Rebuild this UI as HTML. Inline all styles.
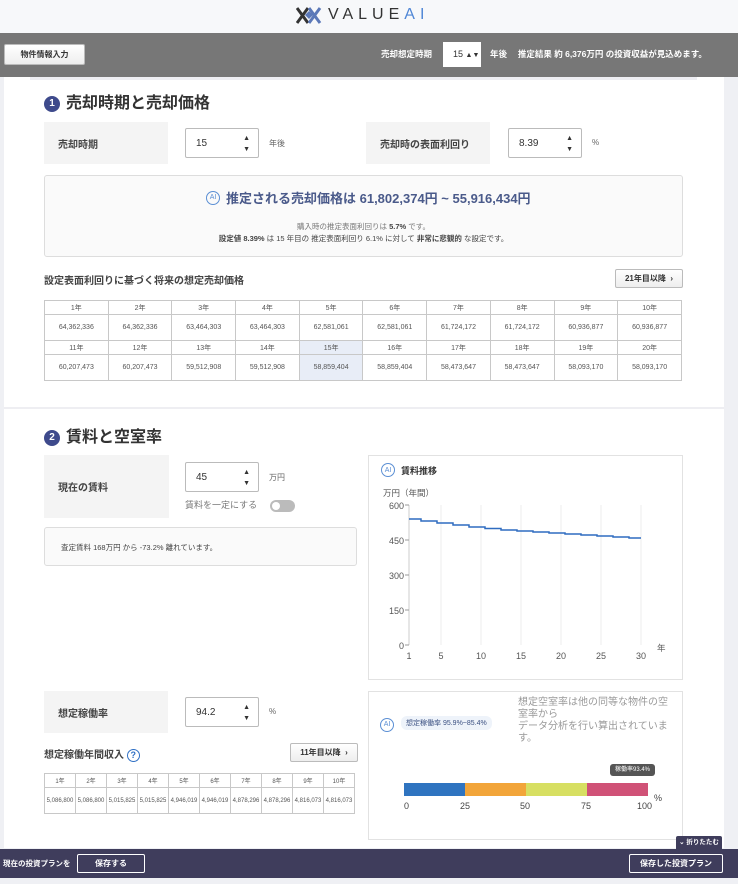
<!DOCTYPE html>
<html><head><meta charset="utf-8">
<style>
*{box-sizing:border-box;margin:0;padding:0}
body{width:738px;height:884px;overflow:hidden;background:#eff0f4;font-family:"Liberation Sans","Noto Sans CJK JP",sans-serif;color:#333;position:relative}
.a{position:absolute}
.lbl{background:#f4f4f4;font-size:10px;font-weight:bold;color:#444;display:flex;align-items:center;padding-left:14px}
.inp{background:#fff;border:1px solid #bbb;border-radius:2px;font-size:10px;display:flex;align-items:center;padding-left:10px}
.inp .sp{position:absolute;right:8px;top:4px;font-size:7px;line-height:11px;color:#333}
table{border-collapse:collapse;position:absolute;font-size:7px;color:#555;table-layout:fixed}
td{border:1px solid #c8c8c8;text-align:center}
.btn{background:linear-gradient(#fff,#eee);border:1px solid #bbb;border-radius:2px;font-size:8px;font-weight:bold;display:flex;align-items:center;justify-content:center;color:#333}
.num{display:inline-flex;width:16px;height:16px;border-radius:50%;background:#3e4a8c;color:#fff;font-size:10px;font-weight:bold;align-items:center;justify-content:center;margin-right:6px;vertical-align:2px}
.h2{font-size:16px;color:#333;font-weight:bold}
.ai{display:inline-flex;width:14px;height:14px;border-radius:50%;border:1px solid #5b8fd4;color:#5b8fd4;font-size:7px;align-items:center;justify-content:center}
</style></head><body>
<div class="a" style="left:0;top:0;width:738px;height:33px;background:#f7f8fa"></div>
<svg class="a" style="left:296px;top:7px" width="28" height="17" viewBox="0 0 28 17"><path d="M1 1L12 16M12 1L1 16" stroke="#333" stroke-width="3"/><path d="M13 1L24 16M24 1L13 16" stroke="#5b78b8" stroke-width="3"/><path d="M9 8L13 4L17 8L13 12Z" fill="#5b78b8"/></svg>
<div class="a" style="left:328px;top:6px;font-size:16px;letter-spacing:5px;color:#333">VALUE<span style="color:#4f86d6">AI</span></div>
<div class="a" style="left:0;top:33px;width:738px;height:44px;background:#777"></div>
<div class="a btn" style="left:4px;top:44px;width:81px;height:21px;font-size:8px">物件情報入力</div>
<div class="a" style="left:381px;top:48px;font-size:8.5px;color:#fff;font-weight:bold">売却想定時期</div>
<div class="a" style="left:443px;top:42px;width:38px;height:25px;background:#fff;font-size:9px;padding:7px 0 0 10px">15 <span style="font-size:7px">▲▼</span></div>
<div class="a" style="left:490px;top:48px;font-size:8.5px;color:#fff;font-weight:bold">年後　 推定結果 約 6,376万円 の投資収益が見込めます。</div>
<div class="a" style="left:4px;top:77px;width:720px;height:771px;background:#fff"></div>
<div class="a" style="left:30px;top:77px;width:667px;height:3px;background:#eeeef3"></div>
<div class="a h2" style="left:44px;top:89px"><span class="num">1</span>売却時期と売却価格</div>
<div class="a lbl" style="left:44px;top:122px;width:124px;height:42px">売却時期</div>
<div class="a inp" style="left:185px;top:128px;width:74px;height:30px">15<span class="sp">▲<br>▼</span></div>
<div class="a" style="left:269px;top:138px;font-size:8px;color:#666">年後</div>
<div class="a lbl" style="left:366px;top:122px;width:124px;height:42px">売却時の表面利回り</div>
<div class="a inp" style="left:508px;top:128px;width:74px;height:30px">8.39<span class="sp">▲<br>▼</span></div>
<div class="a" style="left:592px;top:138px;font-size:8px;color:#666">%</div>
<div class="a" style="left:44px;top:175px;width:639px;height:82px;background:#fafafa;border:1px solid #ddd;border-radius:3px"></div>
<div class="a" style="left:206px;top:188px;font-size:13px;color:#4a5a8a;font-weight:bold;display:flex;align-items:center;gap:6px"><span class="ai" style="font-weight:normal">AI</span>推定される売却価格は 61,802,374円 ~ 55,916,434円</div>
<div class="a" style="left:44px;top:221px;width:639px;text-align:center;font-size:7.5px;color:#777">購入時の推定表面利回りは <b style="color:#444">5.7%</b> です。</div>
<div class="a" style="left:44px;top:233px;width:639px;text-align:center;font-size:7.5px;color:#444"><b>設定値 8.39%</b> は 15 年目の 推定表面利回り 6.1% に対して <b>非常に悲観的</b> な設定です。</div>
<div class="a" style="left:44px;top:272px;font-size:10px;font-weight:bold;color:#444">設定表面利回りに基づく将来の想定売却価格</div>
<div class="a btn" style="left:615px;top:269px;width:68px;height:19px">21年目以降 &nbsp;›</div>
<table style="left:44px;top:300px;width:638px">
<tr style="height:14px"><td>1年</td><td>2年</td><td>3年</td><td>4年</td><td>5年</td><td>6年</td><td>7年</td><td>8年</td><td>9年</td><td>10年</td></tr>
<tr style="height:26px"><td>64,362,336</td><td>64,362,336</td><td>63,464,303</td><td>63,464,303</td><td>62,581,061</td><td>62,581,061</td><td>61,724,172</td><td>61,724,172</td><td>60,936,877</td><td>60,936,877</td></tr>
<tr style="height:14px"><td>11年</td><td>12年</td><td>13年</td><td>14年</td><td style="background:#e8edf7">15年</td><td>16年</td><td>17年</td><td>18年</td><td>19年</td><td>20年</td></tr>
<tr style="height:26px"><td>60,207,473</td><td>60,207,473</td><td>59,512,908</td><td>59,512,908</td><td style="background:#e8edf7">58,859,404</td><td>58,859,404</td><td>58,473,647</td><td>58,473,647</td><td>58,093,170</td><td>58,093,170</td></tr>
</table>
<div class="a" style="left:4px;top:407px;width:720px;height:2px;background:#eeeef2"></div>
<div class="a h2" style="left:44px;top:423px"><span class="num">2</span>賃料と空室率</div>
<div class="a lbl" style="left:44px;top:455px;width:125px;height:63px">現在の賃料</div>
<div class="a inp" style="left:185px;top:462px;width:74px;height:30px">45<span class="sp">▲<br>▼</span></div>
<div class="a" style="left:269px;top:472px;font-size:8px;color:#666">万円</div>
<div class="a" style="left:185px;top:498px;font-size:9px;color:#777">賃料を一定にする</div>
<div class="a" style="left:270px;top:500px;width:25px;height:12px;border-radius:6px;background:#bbb"><div style="position:absolute;left:2px;top:2px;width:8px;height:8px;border-radius:50%;background:#fff"></div></div>
<div class="a" style="left:44px;top:527px;width:313px;height:39px;background:#fafafa;border:1px solid #ddd;border-radius:3px;font-size:7.5px;padding:14px 0 0 16px;color:#444">査定賃料 168万円 から -73.2% 離れています。</div>
<div class="a" style="left:368px;top:455px;width:315px;height:225px;border:1px solid #e2e2e2"></div>
<div class="a" style="left:381px;top:463px;font-size:9px;font-weight:bold;display:flex;align-items:center;gap:6px"><span class="ai" style="font-weight:normal">AI</span>賃料推移</div>
<svg class="a" style="left:368px;top:480px" width="315" height="190" viewBox="368 480 315 190">
<g stroke="#eee"><line x1="441" y1="505" x2="441" y2="645"/><line x1="481" y1="505" x2="481" y2="645"/><line x1="521" y1="505" x2="521" y2="645"/><line x1="561" y1="505" x2="561" y2="645"/><line x1="601" y1="505" x2="601" y2="645"/><line x1="641" y1="505" x2="641" y2="645"/></g>
<line x1="409" y1="505" x2="409" y2="645" stroke="#ccc"/>
<g stroke="#999"><line x1="405" y1="505" x2="409" y2="505"/><line x1="405" y1="540" x2="409" y2="540"/><line x1="405" y1="575" x2="409" y2="575"/><line x1="405" y1="610" x2="409" y2="610"/><line x1="405" y1="645" x2="409" y2="645"/></g>
<g font-size="9" fill="#555" text-anchor="end" font-family="Liberation Sans"><text x="404" y="509">600</text><text x="404" y="544">450</text><text x="404" y="579">300</text><text x="404" y="614">150</text><text x="404" y="649">0</text></g>
<g font-size="9" fill="#555" text-anchor="middle" font-family="Liberation Sans"><text x="409" y="659">1</text><text x="441" y="659">5</text><text x="481" y="659">10</text><text x="521" y="659">15</text><text x="561" y="659">20</text><text x="601" y="659">25</text><text x="641" y="659">30</text></g>
<text x="383" y="496" font-size="8.5" fill="#555" font-family="Liberation Sans,Noto Sans CJK JP">万円（年間）</text>
<text x="657" y="651" font-size="8.5" fill="#555" font-family="Noto Sans CJK JP">年</text>
<path d="M409 519H421V521H437V523H453V525H469V527H485V528.5H501V530H517V531H533V532H549V533H565V534H581V535H597V536H613V537H629V538H641" fill="none" stroke="#2f6cc0" stroke-width="1.5"/>
</svg>
<div class="a lbl" style="left:44px;top:691px;width:124px;height:42px">想定稼働率</div>
<div class="a inp" style="left:185px;top:697px;width:74px;height:30px">94.2<span class="sp">▲<br>▼</span></div>
<div class="a" style="left:269px;top:707px;font-size:8px;color:#666">%</div>
<div class="a" style="left:44px;top:746px;font-size:10px;font-weight:bold;color:#444">想定稼働年間収入 <span style="display:inline-flex;width:13px;height:13px;border-radius:50%;border:1px solid #2e6fc4;color:#2e6fc4;font-size:9px;align-items:center;justify-content:center">?</span></div>
<div class="a btn" style="left:290px;top:743px;width:68px;height:19px">11年目以降 &nbsp;›</div>
<table style="left:44px;top:773px;width:311px;font-size:6px">
<tr style="height:14px"><td>1年</td><td>2年</td><td>3年</td><td>4年</td><td>5年</td><td>6年</td><td>7年</td><td>8年</td><td>9年</td><td>10年</td></tr>
<tr style="height:26px"><td>5,086,800</td><td>5,086,800</td><td>5,015,825</td><td>5,015,825</td><td>4,946,019</td><td>4,946,019</td><td>4,878,296</td><td>4,878,296</td><td>4,816,073</td><td>4,816,073</td></tr>
</table>
<div class="a" style="left:368px;top:691px;width:315px;height:149px;border:1px solid #e2e2e2"></div>
<div class="a" style="left:380px;top:713px"><span class="ai">AI</span></div>
<div class="a" style="left:401px;top:716px;background:#eef3fa;border-radius:6px;font-size:7px;color:#3a4f80;padding:2px 5px">想定稼働率 95.9%~85.4%</div>
<div class="a" style="left:518px;top:697px;width:150px;font-size:10px;color:#999;line-height:12px">想定空室率は他の同等な物件の空室率から<br>データ分析を行い算出されています。</div>
<div class="a" style="left:610px;top:764px;width:45px;height:12px;background:#555;border-radius:3px;font-size:6px;color:#fff;text-align:center;line-height:12px">稼働率93.4%</div>
<div class="a" style="left:404px;top:783px;width:61px;height:13px;background:#2f74c0"></div>
<div class="a" style="left:465px;top:783px;width:61px;height:13px;background:#f2a53a"></div>
<div class="a" style="left:526px;top:783px;width:61px;height:13px;background:#d7df62"></div>
<div class="a" style="left:587px;top:783px;width:61px;height:13px;background:#d05277"></div>
<div class="a" style="left:654px;top:793px;font-size:9px;color:#444">%</div>
<div class="a" style="left:404px;top:801px;font-size:9px;color:#444">0</div>
<div class="a" style="left:460px;top:801px;font-size:9px;color:#444">25</div>
<div class="a" style="left:520px;top:801px;font-size:9px;color:#444">50</div>
<div class="a" style="left:581px;top:801px;font-size:9px;color:#444">75</div>
<div class="a" style="left:637px;top:801px;font-size:9px;color:#444">100</div>
<div class="a" style="left:676px;top:836px;width:46px;height:13px;background:#3f3d5c;font-size:6.5px;color:#fff;font-weight:bold;text-align:center;line-height:13px;border-radius:2px 2px 0 0">⌄ 折りたたむ</div>
<div class="a" style="left:0;top:849px;width:738px;height:29px;background:#3f3d5c"></div>
<div class="a" style="left:3px;top:858px;font-size:7.5px;color:#fff;font-weight:bold">現在の投資プランを</div>
<div class="a" style="left:77px;top:854px;width:68px;height:19px;border:1px solid #fff;border-radius:2px;font-size:8px;color:#fff;font-weight:bold;text-align:center;line-height:17px">保存する</div>
<div class="a" style="left:629px;top:854px;width:94px;height:19px;border:1px solid #fff;border-radius:2px;font-size:8px;color:#fff;font-weight:bold;text-align:center;line-height:17px">保存した投資プラン</div>
</body></html>
